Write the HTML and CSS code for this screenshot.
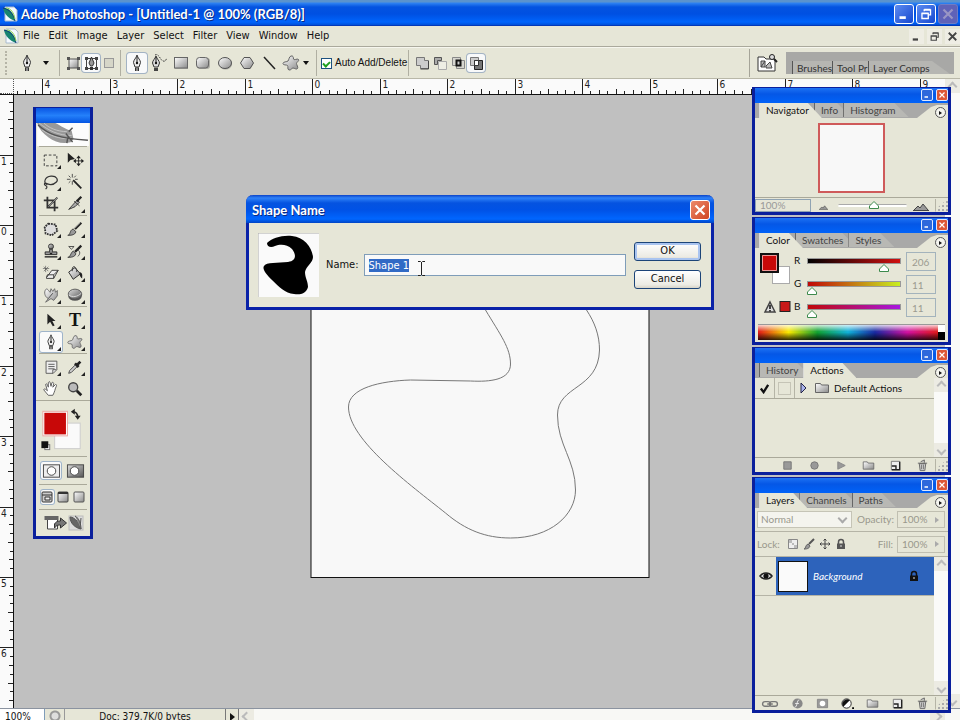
FILE: index.html
```html
<!DOCTYPE html>
<html lang="en">
<head>
<meta charset="utf-8">
<title>Adobe Photoshop - [Untitled-1 @ 100% (RGB/8)]</title>
<link rel="stylesheet" href="styles.css">
</head>
<body>
<svg class="defs" aria-hidden="true">
  <defs>
    <linearGradient id="steel" x1="0" y1="0" x2="1" y2="1"><stop offset="0" stop-color="#fff"/><stop offset="1" stop-color="#8a8a8a"/></linearGradient>
    <linearGradient id="steel-dark" x1="0" y1="0" x2="1" y2="1"><stop offset="0" stop-color="#ddd"/><stop offset="1" stop-color="#555"/></linearGradient>
  </defs>
  <symbol id="i-pen" viewBox="0 0 20 20"><path d="M10 2c-.7 3-3.500 5-3.500 7.500L8 14h4l1.500-4.500C13.500 7 10.700 5 10 2z" fill="#eee" stroke="#333"/><path d="M10 4v5" stroke="#222"/><circle cx="10" cy="10" r="1.200" fill="#111"/><path d="M8 14.500h4V18H8z" fill="#333"/><path d="M10 15v3" stroke="#ddd"/></symbol>
  <symbol id="i-freepen" viewBox="0 0 20 20"><path d="M7 3C6 6 3.500 7.500 3.500 10L5 14h4l1.500-4C10.500 8 8 6 7 3z" fill="#ddd" stroke="#333"/><path d="M7 4v5" stroke="#222"/><circle cx="7" cy="10" r="1.200" fill="#111"/><path d="M5 15h4v3H5z" fill="#444"/><path d="M6 2c4-2 5 5 8 6s3-2 4-3" fill="none" stroke="#333" stroke-dasharray="1.500 1.200"/></symbol>
  <symbol id="i-rect" viewBox="0 0 20 20"><rect x="4" y="5" width="13" height="11" fill="#777" opacity=".5"/><rect x="3.500" y="4.500" width="13" height="10.500" fill="url(#steel)" stroke="#666"/></symbol>
  <symbol id="i-rrect" viewBox="0 0 20 20"><rect x="4" y="5" width="13" height="11" rx="3" fill="#777" opacity=".5"/><rect x="3.500" y="4.500" width="12" height="10.500" rx="3" fill="url(#steel)" stroke="#666"/></symbol>
  <symbol id="i-ellipse" viewBox="0 0 20 20"><ellipse cx="10.500" cy="11" rx="6.500" ry="5.500" fill="#777" opacity=".5"/><ellipse cx="10" cy="10" rx="6.500" ry="5.500" fill="url(#steel)" stroke="#555"/></symbol>
  <symbol id="i-poly" viewBox="0 0 20 20"><path d="M7.500 5h6l3 5.500-3 5.500h-6l-3-5.500z" fill="#777" opacity=".5"/><path d="M7 4.500h6l3.500 5.500-3.500 5.500H7L3.500 10z" fill="url(#steel)" stroke="#555"/></symbol>
  <symbol id="i-line" viewBox="0 0 20 20"><path d="M5 4l11 12" stroke="#222" stroke-width="1.500"/></symbol>
  <symbol id="i-blob" viewBox="0 0 20 20"><path d="M10 3c2-.5 2.500 1 2.500 3s4-1 5 .5-2 2.500-2 4 2 3.500 1 5-3-.5-4.500-.5-2 2.500-4 2-.5-3.500-1.500-4.500S2 12.500 2 10.500 6 9 7 8s1-4.500 3-5z" fill="url(#steel)" stroke="#666"/></symbol>
  <symbol id="i-shape" viewBox="0 0 20 20"><rect x="6" y="6" width="9" height="9" fill="url(#steel)" stroke="#555"/><path d="M4 4h3v3H4zM14 4h3v3h-3zM4 14h3v3H4zM14 14h3v3h-3z" fill="#555"/></symbol>
  <symbol id="i-path" viewBox="0 0 20 20"><path d="M5.500 5.500h10v10h-10z" fill="none" stroke="#444"/><path d="M4 4h3v3H4zM14 4h3v3h-3zM4 14h3v3H4zM14 14h3v3h-3z" fill="#444"/><path d="M10.500 4L8 10l1.500 3h2L13 10z" fill="#999" stroke="#333"/><path d="M9 14h3v3H9z" fill="#333"/></symbol>
  <symbol id="i-fill" viewBox="0 0 20 20"><rect x="5.500" y="5.500" width="9" height="9" fill="#d6d6c8" stroke="#999"/></symbol>
  <symbol id="i-add" viewBox="0 0 20 20"><path d="M4.500 4.500h8v3h4v8h-8v-3h-4z" fill="#ccc" stroke="#777"/><path d="M16.500 8v8h-8" fill="none" stroke="#444"/></symbol>
  <symbol id="i-sub" viewBox="0 0 20 20"><path d="M8.500 8.500h8v8h-8z" fill="#eeeee4" stroke="#aaa"/><path d="M4.500 4.500h7v3h-4v4h-3z" fill="#aaa" stroke="#555"/></symbol>
  <symbol id="i-int" viewBox="0 0 20 20"><path d="M4.500 4.500h8v8h-8zM8.500 7.500h8v8h-8z" fill="#ccc" fill-opacity=".6" stroke="#888"/><path d="M8.500 7.500h4v5h-4z" fill="#ccc" stroke="#111" stroke-width="2"/></symbol>
  <symbol id="i-xor" viewBox="0 0 20 20"><path d="M4.500 4.500h8v8h-8z" fill="#ccc" stroke="#777"/><path d="M8.500 7.500h8v9h-8z" fill="#777" stroke="#222"/><path d="M8.500 7.500h4v5h-4z" fill="#fff" stroke="#333"/></symbol>
  <symbol id="i-browse" viewBox="0 0 22 20"><path d="M2 4h6l2 2h9v12H2z" fill="#fff" stroke="#333"/><path d="M5 8h4v6H5zM5 14l4-6M10 13l4-4 2 6h-6z" fill="#bbb" stroke="#444"/><circle cx="16" cy="4" r="2.500" fill="#ddd" stroke="#222"/><path d="M18 6l3 3" stroke="#222" stroke-width="2"/></symbol>
  <symbol id="i-marquee" viewBox="0 0 20 20"><rect x="2.500" y="4.500" width="14" height="12" fill="none" stroke="#333" stroke-dasharray="3 2"/></symbol>
  <symbol id="i-move" viewBox="0 0 20 20"><path d="M2 2v11l3-3 5-1z" fill="#222"/><path d="M14 6v10M9 11h10" stroke="#222"/><path d="M14 5l-2.500 3h5zM14 17l-2.500-3h5zM8 11l3-2.500v5zM20 11l-3-2.500v5z" fill="#222"/></symbol>
  <symbol id="i-lasso" viewBox="0 0 20 20"><path d="M6 13C1 11 3 4 10 3.500S18 8 16 10s-6 4-10 2-4 1-2 2 2 2 0 4" fill="none" stroke="#333" stroke-width="1.300"/></symbol>
  <symbol id="i-wand" viewBox="0 0 20 20"><path d="M8 8l9 9" stroke="#222" stroke-width="2"/><path d="M7 1v4M7 9v4M1 7h4M3 3l2 2M11 3L9 5M3 11l2-2M10 7h3" stroke="#444"/></symbol>
  <symbol id="i-crop" viewBox="0 0 20 20"><path d="M6 2v12h12M2 6h12v12M7 13L17 3" fill="none" stroke="#333" stroke-width="2"/><path d="M7 13L17 3" stroke="#999"/></symbol>
  <symbol id="i-slice" viewBox="0 0 20 20"><path d="M3 16L12 6l3 2-5 5z" fill="#aaa" stroke="#333"/><path d="M12 7l5-5" stroke="#222" stroke-width="2.500"/><path d="M9 7l6 5" stroke="#333"/></symbol>
  <symbol id="i-heal" viewBox="0 0 20 20"><path d="M7 4l8 1 2 7-6 5-7-2-1-7z" fill="#ddd" stroke="#333" stroke-width="2" stroke-dasharray="2 1"/></symbol>
  <symbol id="i-brush" viewBox="0 0 20 20"><path d="M10 10l7-7" stroke="#222" stroke-width="2.500"/><path d="M2 17c3 0 2-6 6-7l3 3c-1 4-6 4-9 4z" fill="#999" stroke="#333"/><path d="M10 9l6-6" stroke="#999"/></symbol>
  <symbol id="i-stamp" viewBox="0 0 20 20"><circle cx="10" cy="5" r="2.800" fill="url(#steel-dark)" stroke="#333"/><path d="M8.500 8h3v3h5v3h-13v-3h5z" fill="#999" stroke="#222"/><path d="M3 16.500h14" stroke="#222" stroke-width="1.500"/><path d="M8 12h4l-2 2z" fill="#111"/></symbol>
  <symbol id="i-hist" viewBox="0 0 20 20"><path d="M10 11l7-7" stroke="#222" stroke-width="2.500"/><path d="M2 17c3 0 3-5 6-7l3 3c-1 4-6 4-9 4z" fill="#999" stroke="#333"/><path d="M3 5h6l-3 3zM13 9c3 1 3 5 0 7" fill="none" stroke="#444"/></symbol>
  <symbol id="i-erase" viewBox="0 0 20 20"><path d="M5 15l6-8h7l-5 9H5z" fill="#eee" stroke="#333"/><path d="M5 15l1-3h7l5-5M13 12v4" fill="none" stroke="#333"/><path d="M4 2v7M1 5h7M2 3l5 5M7 3L2 8" stroke="#555" stroke-width=".700"/></symbol>
  <symbol id="i-bucket" viewBox="0 0 20 20"><path d="M3 9l7-5 6 7-8 6z" fill="url(#steel)" stroke="#222"/><path d="M7 8c-1-6 4-8 5 1" fill="none" stroke="#333"/><path d="M15 9c4 1 3 4 3 7-2-1-3-3-3-7z" fill="#222"/></symbol>
  <symbol id="i-smudge" viewBox="0 0 20 20"><path d="M4 18l3-4c-4-2-5-7-3-10 2-2 3 1 5 3l1-4 2 3 2-3 1 4 2-2v6l-4 5-3-2z" fill="url(#steel)" stroke="#666"/><path d="M7 14l5-6" stroke="#444"/></symbol>
  <symbol id="i-sponge" viewBox="0 0 20 20"><ellipse cx="10" cy="11" rx="7.500" ry="5.500" fill="#555"/><ellipse cx="10" cy="9" rx="7.500" ry="5.500" fill="url(#steel-dark)" stroke="#555"/><path d="M3 10c4 3 10 2 14-2" fill="none" stroke="#ddd"/></symbol>
  <symbol id="i-arrow" viewBox="0 0 20 20"><path d="M6 3v12l3-3 3 5 2-1-2.500-5H15z" fill="#222"/></symbol>
  <symbol id="i-note" viewBox="0 0 20 20"><path d="M4.500 3.500h12V13l-4 4h-8z" fill="#eee" stroke="#555"/><path d="M7 7h7M7 9.500h7M7 12h7M12 17v-4h4" fill="none" stroke="#555"/></symbol>
  <symbol id="i-dropper" viewBox="0 0 20 20"><path d="M3 17l1-3 7-7 2 2-7 7z" fill="#ccc" stroke="#444"/><path d="M10 6l4 4M12 8l4-4" stroke="#222" stroke-width="3"/></symbol>
  <symbol id="i-hand" viewBox="0 0 20 20"><path d="M7 17L2 11c0-2 2-1 4 1L4 5c1-2 2 0 3 3V3c1-2 2-1 2 0l1 4 1-4c1-1 2 0 2 1l-1 4 3-3c2 0 1 2 0 4-1 4-2 6-3 8z" fill="#fff" stroke="#555"/></symbol>
  <symbol id="i-zoom" viewBox="0 0 20 20"><circle cx="8" cy="8" r="5" fill="#bbb" stroke="#444" stroke-width="1.500"/><path d="M12 12l5 5" stroke="#222" stroke-width="3"/></symbol>
  <symbol id="i-std" viewBox="0 0 20 16"><rect x="1.500" y="1.500" width="17" height="13" fill="#eee" stroke="#444"/><circle cx="10" cy="8" r="4.500" fill="#fff" stroke="#444"/></symbol>
  <symbol id="i-qm" viewBox="0 0 20 16"><rect x="1.500" y="1.500" width="17" height="13" fill="url(#steel-dark)" stroke="#444"/><circle cx="9" cy="8" r="4.500" fill="#fff" stroke="#444"/></symbol>
  <symbol id="i-scr1" viewBox="0 0 14 14"><rect x="2" y="2" width="10" height="10" rx="1" fill="#ccc" stroke="#333"/><path d="M2 5h10M5 7h5v3H5z" fill="#eee" stroke="#333"/></symbol>
  <symbol id="i-scr2" viewBox="0 0 14 14"><rect x="2" y="2" width="10" height="10" rx="1" fill="url(#steel)" stroke="#444"/><path d="M2 3h10" stroke="#333" stroke-width="2"/></symbol>
  <symbol id="i-scr3" viewBox="0 0 14 14"><rect x="2" y="2" width="10" height="10" rx="1" fill="url(#steel)" stroke="#555"/></symbol>
  <symbol id="i-jump" viewBox="0 0 24 18"><path d="M4 4h10v11H4z" fill="#fff" stroke="#444"/><path d="M1 2h14v4H1z" fill="#666"/><path d="M11 10c2-3 4-3 6-3V4l6 5-6 5v-3c-2 0-4 0-6 3z" fill="#777" stroke="#333"/></symbol>
  <symbol id="i-feather" viewBox="0 0 16 18"><rect x="1" y="2" width="14" height="14" fill="#ddd" stroke="#bbb"/><path d="M2 3c5 0 10 7 11 12C7 14 2 9 2 3zM13 4l-1 10" fill="#666" stroke="#555"/><path d="M7 2c4 2 6 8 6 13" fill="#888" stroke="#555"/></symbol>
  <symbol id="i-leaf" viewBox="0 0 16 16"><path d="M3 1h9l3 3v11H3z" fill="#f4f9ff" stroke="#abc"/><path d="M1 2c6-1 11 5 12 13C7 13 2 8 1 2z" fill="#17846f"/><path d="M1 2c6 1 11 6 12 13" fill="none" stroke="#123a7a"/><path d="M4 2c5 0 8 5 9 11" fill="none" stroke="#8bd14a"/></symbol>
  <symbol id="i-folder" viewBox="0 0 16 14"><path d="M1.500 11.500v-9h5l1 1.500h7v7.500z" fill="url(#steel)" stroke="#666"/></symbol>
  <symbol id="i-new" viewBox="0 0 14 14"><path d="M2.500 2.500h9v9h-9z" fill="#eee" stroke="#777"/><path d="M3 7.500h4.500V11M11.500 3v8.500H3" fill="none" stroke="#222" stroke-width="1.500"/></symbol>
  <symbol id="i-trash" viewBox="0 0 14 14"><path d="M3.500 5h7l-1 7.500h-5zM2 4.500h10M5 3l4-2v3" fill="#ccc" stroke="#666"/><path d="M6 6v5M8 6v5" stroke="#777"/></symbol>
  <symbol id="i-lock" viewBox="0 0 12 12"><path d="M3.500 6V4a2.500 2.500 0 015 0v2" fill="none" stroke="currentColor" stroke-width="1.500"/><path d="M2 5.500h8V11H2z" fill="currentColor"/><path d="M5.500 7h1v2h-1z" fill="#ddd"/></symbol>
  <symbol id="i-thumb" viewBox="0 0 10 8"><path d="M.5 7.500V5L5 .5 9.500 5v2.500z" fill="#fff" stroke="#3c8a4c"/></symbol>
  <symbol id="i-min" viewBox="0 0 20 20"><path d="M5 14h7" stroke="currentColor" stroke-width="3"/></symbol>
  <symbol id="i-restore" viewBox="0 0 20 20"><path d="M8 7V5.500h7V11h-2M8 5h7M5.500 9.500h7v5.500h-7zM5 9h8" fill="none" stroke="currentColor" stroke-width="1.500"/></symbol>
  <symbol id="i-close" viewBox="0 0 20 20"><path d="M5 5l10 10M15 5L5 15" stroke="currentColor" stroke-width="2.400"/></symbol>
  <symbol id="i-peak" viewBox="0 0 16 8"><path d="M0 7.500h16M1 7l4-4 2 2 3-4 5 6" fill="#999" stroke="#444"/></symbol>
</svg>

<div class="app">
  <header class="titlebar">
    <svg class="ic16"><use href="#i-leaf"/></svg>
    <h1>Adobe Photoshop - [Untitled-1 @ 100% (RGB/8)]</h1>
    <div class="winbtns">
      <button class="win" aria-label="Minimize"><svg><use href="#i-min"/></svg></button>
      <button class="win" aria-label="Restore"><svg><use href="#i-restore"/></svg></button>
      <button class="win off" aria-label="Close"><svg><use href="#i-close"/></svg></button>
    </div>
  </header>

  <nav class="menubar">
    <svg class="ic16"><use href="#i-leaf"/></svg>
    <div class="menus">
      <button>File</button><button>Edit</button><button>Image</button><button>Layer</button><button>Select</button><button>Filter</button><button>View</button><button>Window</button><button>Help</button>
    </div>
    <div class="docbtns">
      <button aria-label="Minimize document"><svg><use href="#i-min"/></svg></button>
      <button aria-label="Restore document"><svg><use href="#i-restore"/></svg></button>
      <button aria-label="Close document"><svg><use href="#i-close"/></svg></button>
    </div>
  </nav>

  <section class="options" aria-label="Tool options">
    <div class="grip"></div>
    <button class="opt" aria-label="Pen presets"><svg><use href="#i-pen"/></svg></button>
    <span class="caret"></span>
    <div class="optgroup modes">
      <button class="opt" aria-label="Shape layers"><svg><use href="#i-shape"/></svg></button>
      <button class="opt on" aria-label="Paths"><svg><use href="#i-path"/></svg></button>
      <button class="opt" aria-label="Fill pixels"><svg><use href="#i-fill"/></svg></button>
    </div>
    <div class="optgroup shapes">
      <button class="opt on" aria-label="Pen"><svg><use href="#i-pen"/></svg></button>
      <button class="opt" aria-label="Freeform pen"><svg><use href="#i-freepen"/></svg></button>
      <button class="opt" aria-label="Rectangle"><svg><use href="#i-rect"/></svg></button>
      <button class="opt" aria-label="Rounded rectangle"><svg><use href="#i-rrect"/></svg></button>
      <button class="opt" aria-label="Ellipse"><svg><use href="#i-ellipse"/></svg></button>
      <button class="opt" aria-label="Polygon"><svg><use href="#i-poly"/></svg></button>
      <button class="opt" aria-label="Line"><svg><use href="#i-line"/></svg></button>
      <button class="opt" aria-label="Custom shape"><svg><use href="#i-blob"/></svg></button>
      <span class="caret"></span>
    </div>
    <div class="optgroup auto">
      <input type="checkbox" id="auto" checked><label for="auto">Auto Add/Delete</label>
    </div>
    <div class="optgroup combine">
      <button class="opt" aria-label="Add"><svg><use href="#i-add"/></svg></button>
      <button class="opt" aria-label="Subtract"><svg><use href="#i-sub"/></svg></button>
      <button class="opt" aria-label="Intersect"><svg><use href="#i-int"/></svg></button>
      <button class="opt on" aria-label="Exclude"><svg><use href="#i-xor"/></svg></button>
    </div>
    <div class="well-area">
      <button class="browse" aria-label="Go to Bridge"><svg><use href="#i-browse"/></svg></button>
      <div class="well">
        <button>Brushes</button><button>Tool Pr</button><button>Layer Comps</button>
      </div>
    </div>
  </section>

  <main class="work">
    <div class="hrow"><div class="corner"></div><svg class="hruler" id="hruler"></svg></div>
    <div class="vrow">
      <svg class="vruler" id="vruler"></svg>
      <div class="canvas">
        <svg class="artboard" viewBox="0 0 339 338">
          <rect x=".5" y=".5" width="338" height="337" fill="#f8f8f8" stroke="#111"/>
          <path d="M40 42C80 0 150 20 175 70C190 95 200 108 200 124C200 140 180 142 160 141L100 140C70 141 38 148 38 167C38 200 100 245 135 273C155 290 175 298 200 298C240 298 265 275 265 250C265 220 247 205 247 175C247 145 288 150 289 110C289 95 284 82 276 70C250 10 120 -10 40 42Z" fill="none" stroke="#777" stroke-width="1"/>
        </svg>
      </div>
    </div>
    <div class="vscroll pscroll"><button aria-label="Scroll up"></button><button class="dn" aria-label="Scroll down"></button></div>
  </main>

  <footer class="status">
    <input class="zoompct" aria-label="Zoom" value="100%">
    <button class="stat-ic" aria-label="Version cue"></button>
    <span class="docinfo">Doc: 379.7K/0 bytes</span>
    <button class="stat-arrow" aria-label="Status menu"></button>
    <div class="hscroll"><button class="lf" aria-label="Scroll left"></button><button class="rt" aria-label="Scroll right"></button></div>
  </footer>

  <aside class="toolbox" aria-label="Tools">
    <div class="tb-title"></div>
    <svg class="quill" viewBox="0 0 54 24"><rect width="54" height="24" fill="#fcfcfc"/><path d="M0 0h19c6 3 11 7 17 8l2 9-3 3c-8 2-17 0-23-5C6 11 2 6 0 0z" fill="#999"/><path d="M2 0c10 8 20 13 34 13M7 0c5 5 14 9 24 9M5 7c8 6 18 10 29 9" fill="none" stroke="#c4c4c4"/><path d="M1 2c10 9 20 14 52 16M30 11l7 9M33 9l4-4M32 15l-1 6" fill="none" stroke="#555" stroke-width="1.500"/></svg>
    <div class="tools">
      <button aria-label="Marquee"><svg><use href="#i-marquee"/></svg></button><button class="nofly" aria-label="Move"><svg><use href="#i-move"/></svg></button>
      <button aria-label="Lasso"><svg><use href="#i-lasso"/></svg></button><button class="nofly" aria-label="Magic wand"><svg><use href="#i-wand"/></svg></button>
      <button class="nofly" aria-label="Crop"><svg><use href="#i-crop"/></svg></button><button aria-label="Slice"><svg><use href="#i-slice"/></svg></button>
    </div>
    <div class="tools">
      <button aria-label="Healing"><svg><use href="#i-heal"/></svg></button><button aria-label="Brush"><svg><use href="#i-brush"/></svg></button>
      <button aria-label="Stamp"><svg><use href="#i-stamp"/></svg></button><button aria-label="History brush"><svg><use href="#i-hist"/></svg></button>
      <button aria-label="Eraser"><svg><use href="#i-erase"/></svg></button><button aria-label="Paint bucket"><svg><use href="#i-bucket"/></svg></button>
      <button aria-label="Smudge"><svg><use href="#i-smudge"/></svg></button><button aria-label="Sponge"><svg><use href="#i-sponge"/></svg></button>
    </div>
    <div class="tools">
      <button aria-label="Path selection"><svg><use href="#i-arrow"/></svg></button><button class="type">T</button>
      <button class="on" aria-label="Pen"><svg><use href="#i-pen"/></svg></button><button aria-label="Custom shape"><svg><use href="#i-blob"/></svg></button>
    </div>
    <div class="tools">
      <button aria-label="Notes"><svg><use href="#i-note"/></svg></button><button aria-label="Eyedropper"><svg><use href="#i-dropper"/></svg></button>
      <button class="nofly" aria-label="Hand"><svg><use href="#i-hand"/></svg></button><button class="nofly" aria-label="Zoom"><svg><use href="#i-zoom"/></svg></button>
    </div>
    <svg class="colors" viewBox="0 0 54 56"><rect x="18.500" y="22.500" width="26" height="26" fill="#fafafa" stroke="#ccc"/><rect x="6.500" y="10.500" width="25" height="25" fill="#fff" stroke="#e7a9a4"/><rect x="8" y="12" width="22" height="22" fill="#c80808"/><path d="M37 11c4 0 5 2 5 6" fill="none" stroke="#222" stroke-width="1.500"/><path d="M35 11l4-3v6zM42 19l-3-4h6z" fill="#222"/><rect x="8.500" y="44.500" width="5" height="5" fill="#fff" stroke="#777"/><path d="M5 41h7v7H5z" fill="#111"/></svg>
    <div class="mask"><button class="on" aria-label="Standard mode"><svg><use href="#i-std"/></svg></button><button aria-label="Quick mask"><svg><use href="#i-qm"/></svg></button></div>
    <div class="screens"><button class="on" aria-label="Standard screen"><svg><use href="#i-scr1"/></svg></button><button aria-label="Full screen with menu"><svg><use href="#i-scr2"/></svg></button><button aria-label="Full screen"><svg><use href="#i-scr3"/></svg></button></div>
    <div class="jump"><button aria-label="Jump to ImageReady"><svg class="j1"><use href="#i-jump"/></svg></button><button aria-label="ImageReady"><svg class="j2"><use href="#i-feather"/></svg></button></div>
  </aside>

  <aside class="dock" aria-label="Palettes">
    <section class="palette nav-pal">
      <div class="p-title"><button class="pb" aria-label="Minimize"><svg><use href="#i-min"/></svg></button><button class="pb red" aria-label="Close"><svg><use href="#i-close"/></svg></button></div>
      <div class="tabs"><button class="tab on">Navigator</button><button class="tab">Info</button><button class="tab">Histogram</button><span class="sweep"></span><button class="pm" aria-label="Palette menu"></button></div>
      <div class="nav-body"><div class="preview"></div></div>
      <div class="p-foot nav-foot"><input aria-label="Zoom level" value="100%" disabled><svg class="pk small"><use href="#i-peak"/></svg><div class="track"><svg class="knob"><use href="#i-thumb"/></svg></div><svg class="pk"><use href="#i-peak"/></svg><i class="size"></i></div>
    </section>

    <section class="palette col-pal">
      <div class="p-title"><button class="pb" aria-label="Minimize"><svg><use href="#i-min"/></svg></button><button class="pb red" aria-label="Close"><svg><use href="#i-close"/></svg></button></div>
      <div class="tabs"><button class="tab on">Color</button><button class="tab">Swatches</button><button class="tab">Styles</button><span class="sweep"></span><button class="pm" aria-label="Palette menu"></button></div>
      <div class="col-body">
        <svg class="swatch" viewBox="0 0 34 68"><rect x="12.500" y="14.500" width="17" height="17" fill="#fff" stroke="#aaa"/><rect x="1" y="2" width="17" height="18" fill="#c80808" stroke="#111" stroke-width="2"/><path d="M2.500 3.500h14v15h-14z" fill="none" stroke="#e99"/><path d="M10 50l5 10H5z" fill="#ddd" stroke="#444" stroke-width="1.500"/><path d="M10 53v4M10 58v1.500" stroke="#111" stroke-width="1.500"/><rect x="20" y="49.500" width="10" height="10" fill="#c81818" stroke="#222"/></svg>
        <div class="rgb">
          <label for="r">R</label><div class="ramp r"><i></i><svg class="knob" style="left:77%"><use href="#i-thumb"/></svg></div><input id="r" value="206" disabled>
          <label for="g">G</label><div class="ramp g"><i></i><svg class="knob" style="left:0"><use href="#i-thumb"/></svg></div><input id="g" value="11" disabled>
          <label for="b">B</label><div class="ramp b"><i></i><svg class="knob" style="left:0"><use href="#i-thumb"/></svg></div><input id="b" value="11" disabled>
        </div>
      </div>
      <div class="spectrum"><div class="hues"></div><div class="bw"></div></div>
    </section>

    <section class="palette act-pal">
      <div class="p-title"><button class="pb" aria-label="Minimize"><svg><use href="#i-min"/></svg></button><button class="pb red" aria-label="Close"><svg><use href="#i-close"/></svg></button></div>
      <div class="tabs"><button class="tab">History</button><button class="tab on">Actions</button><span class="sweep"></span><button class="pm" aria-label="Palette menu"></button></div>
      <div class="listwrap act-list">
        <div class="list"><div class="arow"><span class="cell"><svg viewBox="0 0 12 12"><path d="M2 6l3 4 5-8" fill="none" stroke="#111" stroke-width="2.500"/></svg></span><span class="cell"><i class="box"></i></span><svg class="tri" viewBox="0 0 8 12"><path d="M1 1l5 5-5 5z" fill="#aab4ec" stroke="#224"/></svg><svg class="fold"><use href="#i-folder"/></svg><span>Default Actions</span></div></div>
        <div class="pscroll"><button aria-label="Up"></button><button class="dn" aria-label="Down"></button></div>
      </div>
      <div class="p-foot"><div class="ficons act-ic">
        <svg viewBox="0 0 14 14"><path d="M3 3h8v8H3z" fill="#999" stroke="#777"/></svg><svg viewBox="0 0 14 14"><circle cx="7" cy="7" r="4" fill="#999" stroke="#777"/></svg><svg viewBox="0 0 14 14"><path d="M3 3l8 4-8 4z" fill="#999" stroke="#888"/></svg><svg><use href="#i-folder"/></svg><svg><use href="#i-new"/></svg><svg><use href="#i-trash"/></svg></div><i class="size"></i></div>
    </section>

    <section class="palette lay-pal">
      <div class="p-title"><button class="pb" aria-label="Minimize"><svg><use href="#i-min"/></svg></button><button class="pb red" aria-label="Close"><svg><use href="#i-close"/></svg></button></div>
      <div class="tabs"><button class="tab on">Layers</button><button class="tab">Channels</button><button class="tab">Paths</button><span class="sweep"></span><button class="pm" aria-label="Palette menu"></button></div>
      <div class="lrow"><div class="selwrap"><select aria-label="Blend mode" disabled><option>Normal</option></select></div><label for="op">Opacity:</label><div class="num"><input id="op" value="100%" disabled><span></span></div></div>
      <div class="lrow lockrow"><span>Lock:</span>
        <svg viewBox="0 0 12 12"><path d="M1.500 1.500h9v9h-9z" fill="#eee" stroke="#888"/><path d="M2 2h3v3H2zM7 7h3v3H7zM5 5h2v2H5z" fill="#bbb"/></svg>
        <svg viewBox="0 0 12 12"><path d="M6 6l5-5" stroke="#555" stroke-width="2"/><path d="M1 11c2 0 1-4 4-5l2 2c-1 3-4 3-6 3z" fill="#999" stroke="#666"/></svg>
        <svg viewBox="0 0 12 12"><path d="M6 1v10M1 6h10M4.500 2.500L6 1l1.500 1.500M4.500 9.500L6 11l1.500-1.500M2.500 4.500L1 6l1.500 1.500M9.500 4.500L11 6 9.500 7.500" fill="none" stroke="#444"/></svg>
        <svg class="lk"><use href="#i-lock"/></svg>
        <label for="fi">Fill:</label><div class="num"><input id="fi" value="100%" disabled><span></span></div></div>
      <div class="listwrap lay-list">
        <div class="list"><div class="layer"><span class="eye"><svg viewBox="0 0 14 12"><path d="M1 6c3-4 9-4 12 0-3 4-9 4-12 0z" fill="#ddd" stroke="#222" stroke-width="1.500"/><circle cx="7" cy="6" r="2.600" fill="#111"/></svg></span><div class="lsel"><span class="lthumb"></span><em>Background</em><svg class="lk"><use href="#i-lock"/></svg></div></div></div>
        <div class="pscroll"><button aria-label="Up"></button><button class="dn" aria-label="Down"></button></div>
      </div>
      <div class="p-foot"><div class="ficons">
        <svg class="wide" viewBox="0 0 18 14"><path d="M3 5h4a2 2 0 010 5H3.500a2 2 0 010-5M11 5h3.500a2 2 0 010 5H11a2 2 0 010-5M6 7.500h6" fill="none" stroke="#777" stroke-width="1.500"/></svg>
        <svg viewBox="0 0 14 14"><circle cx="7" cy="7" r="5.500" fill="#888"/><path d="M9 3c-3 0-2 8-5 8M4.500 7h4" stroke="#eee" fill="none"/></svg>
        <svg viewBox="0 0 14 14"><path d="M1.500 2.500h11v9h-11z" fill="#999" stroke="#888"/><circle cx="7" cy="7" r="3" fill="#fff"/></svg>
        <svg viewBox="0 0 14 14"><circle cx="6" cy="7" r="5" fill="#fff" stroke="#222"/><path d="M2.500 10.500a5 5 0 017-7z" fill="#111"/><path d="M12 11h2v2h-2z"/></svg>
        <svg><use href="#i-folder"/></svg><svg><use href="#i-new"/></svg><svg><use href="#i-trash"/></svg></div><i class="size"></i></div>
    </section>
  </aside>

  <form class="dialog" role="dialog" aria-label="Shape Name">
    <div class="d-title"><h2>Shape Name</h2><button type="button" class="d-close" aria-label="Close"><svg><use href="#i-close"/></svg></button></div>
    <div class="d-body">
      <svg class="d-thumb" viewBox="0 0 61 64"><rect width="61" height="64" fill="#fafafa"/><path d="M0 64V0h61" fill="none" stroke="#aaa"/><path d="M9 10C14 5 24 2 34 3C46 4 54 14 55 24C55 30 48 33 47 39C47 45 50 48 50 54C48 61 42 62 36 61C27 60 21 54 14 47C8 41 4 36 6 33C8 29 20 30 30 29C39 28 38 21 34 16C29 11 22 11 17 13C13 15 9 14 9 10Z" fill="#000"/></svg>
      <label for="name">Name:</label>
      <input id="name" value="Shape 1" autocomplete="off">
      <div class="d-btns"><button type="button" class="default">OK</button><button type="button">Cancel</button></div>
    </div>
    <svg class="ibeam" viewBox="0 0 9 17"><path d="M1 1.500h2.500L4.500 2.500l1-1H8M4.500 2v13M1 15.500h2.500l1-1 1 1H8" fill="none" stroke="#222"/></svg>
  </form>
</div>
<script src="app.js"></script>
</body>
</html>
```

FILE: styles.css
```css
* { box-sizing: border-box; }
:root {
  --face: #e6e6d7;
  --navy: #0a1f9c;
  --ui: "DejaVu Sans Condensed", "Noto Sans", sans-serif;
  --pal: Lato, "Open Sans", sans-serif;
}
body { margin: 0; background: #c0c0c0; font: 11px/14px var(--ui); color: #111; }
button, input, select { font: inherit; color: inherit; margin: 0; padding: 0; border: 0; background: none; border-radius: 0; }
button svg { display: block; }
h1, h2 { margin: 0; }
.defs { position: absolute; width: 0; height: 0; }
.app { position: relative; display: flex; flex-direction: column; height: 100vh; overflow: hidden; }
.ic16 { width: 16px; height: 16px; flex: none; }

.titlebar { display: flex; align-items: center; height: 26px; flex: none; padding: 2px 2px 0 2px; border-bottom: 1px solid #0438b8; background: linear-gradient(#5b93cd 0 2px, #2f83f2 3px, #0453e0 7px, #0050e2 14px, #0064fc 22px, #0048cc 26px); }
.titlebar h1, .dialog h2 { font: bold 13px/18px var(--pal); color: #fff; text-shadow: 1px 1px 0 #0a2a80; white-space: nowrap; }
.titlebar h1 { margin-left: 3px; flex: 1; }
.winbtns { display: flex; gap: 2px; }
.win { width: 20px; height: 20px; border: 1px solid #fff; border-radius: 3px; color: #fff; background: linear-gradient(135deg, #5d8cf0, #1547d0); }
.win svg { width: 18px; height: 18px; }
.win.off { border-color: #6f7cc4; background: #5f62b8; color: #9a96c4; }

.menubar { display: flex; align-items: center; height: 21px; flex: none; padding: 0 0 0 3px; background: var(--face); border-bottom: 1px solid #aaa99c; }
.menus { display: flex; gap: 9px; flex: 1; padding-left: 4px; }
.docbtns { display: flex; gap: 3px; }
.docbtns button { width: 15px; height: 15px; background: #eeede4; color: #444; }
.docbtns svg { width: 15px; height: 15px; }

.options { display: flex; align-items: center; height: 32px; flex: none; background: var(--face); border-top: 1px solid #f6f6ee; border-bottom: 1px solid #b9b8a8; }
.grip { width: 2px; height: 24px; margin: 0 10px 0 5px; border-left: 2px dotted #b5b4a6; }
.opt { width: 20px; height: 20px; flex: none; border-radius: 3px; }
.opt svg { width: 20px; height: 20px; }
.opt.on { background: #f8f9fa; box-shadow: 0 0 0 1px #a3b3c4; }
.caret { border: 3px solid transparent; border-top: 4px solid #111; border-bottom: 0; margin: 0 6px; }
.optgroup { display: flex; align-items: center; height: 26px; border-left: 1px solid #b0afa2; }
.modes { margin-left: 4px; padding: 0 2px 0 4px; }
.modes .opt, .combine .opt { display: grid; place-content: center; width: 18px; height: 18px; }
.shapes { width: 196px; padding-left: 6px; justify-content: space-between; }
.shapes .caret { margin: 0 7px 0 0; }
.auto { padding: 0 6px 0 4px; width: 92px; white-space: nowrap; gap: 3px; font: 10px/14px "Liberation Sans", sans-serif; }
.auto input { appearance: none; width: 11px; height: 11px; flex: none; border: 1px solid #1c5180; background: #fff; display: grid; place-items: center; }
.auto input::after { content: ""; width: 3px; height: 5px; border: solid #21a121; border-width: 0 2px 2px 0; transform: rotate(45deg); }
.combine { padding-left: 4px; }
.well-area { display: flex; align-items: center; margin-left: auto; height: 28px; padding: 0 6px 0 6px; gap: 8px; border-left: 1px solid #a5a498; }
.browse svg { width: 22px; height: 20px; }
.well { display: flex; align-items: flex-end; width: 168px; height: 22px; padding-left: 6px; background: #a8a8a6; font: 10px/12px var(--pal); color: #333; }
.well button { height: 13px; padding: 0 0 0 4px; border-left: 1px solid #555; background: #b6b6b2; white-space: nowrap; }
.well button:nth-child(-n+2) { width: 40px; text-align: left; flex: none; }
.well button:nth-child(2) { width: 36px; }
.well button:last-child { flex: 1; margin-right: 4px; text-align: left; clip-path: polygon(0 0, calc(100% - 18px) 0, 100% 100%, 0 100%); }

.work { position: relative; flex: 1; display: flex; flex-direction: column; min-height: 0; padding-right: 15px; background: #f4f4f0; }
.hrow { display: flex; height: 16px; flex: none; background: #fafafa; border-bottom: 1px solid #111; }
.corner { width: 14px; border-right: 1px dotted #555; border-bottom: 1px dotted #555; flex: none; }
.hruler { flex: 1; min-width: 0; height: 15px; }
.vrow { flex: 1; min-height: 0; display: flex; }
.vruler { width: 14px; height: 100%; flex: none; background: #fafafa; border-right: 1px solid #111; }
.hruler line, .vruler line { stroke: #222; shape-rendering: crispEdges; }
.hruler text, .vruler text { font: 10px var(--ui); fill: #222; }
.canvas { position: relative; flex: 1; overflow: hidden; background: #c0c0c0; }
.artboard { position: absolute; left: 296px; top: 145px; width: 340px; height: 338px; }
.work .vscroll { position: absolute; right: 0; top: 0; bottom: 0; width: 15px; }

.status { display: flex; height: 12px; flex: none; line-height: 15px; font-size: 10px; background: var(--face); border-top: 1px solid #8b93a0; overflow: hidden; }
.status > * { height: 15px; flex: none; }
.zoompct { width: 45px; padding-left: 5px; background: #fff; border-right: 1px solid #7f9db9; }
.stat-ic { width: 20px; border-right: 1px solid #999; background: radial-gradient(circle at 10px 7px, #ddd 0 3px, #999 4px 5px, transparent 6px); }
.docinfo { width: 161px; text-align: center; border-right: 1px solid #777; }
.stat-arrow { width: 13px; border-right: 1px solid #777; display: grid; place-items: center; }
.stat-arrow::after { content: ""; border: 4px solid transparent; border-left: 5px solid #111; border-right: 0; }
.status .hscroll { flex: 1; display: flex; justify-content: space-between; padding-right: 15px; background: #f8f8f5; }
.hscroll button { width: 15px; background: #ecebe2; display: grid; place-items: center; }
.hscroll button::after { content: ""; width: 5px; height: 5px; border: solid #bbb; border-width: 2px 0 0 2px; transform: rotate(-45deg); }
.hscroll .rt::after { transform: rotate(135deg); }

.toolbox { position: absolute; left: 33px; top: 107px; width: 60px; border: solid var(--navy); border-width: 1px 3px 3px; background: var(--face); }
.tb-title { height: 15px; background: linear-gradient(#0a56e4, #2480fa, #0455e2); }
.quill { display: block; width: 54px; height: 23px; }
.tools, .mask, .screens { margin: 0 3px; border-top: 1px solid #aaa99a; }
.tools { display: grid; grid-template-columns: 24px 24px; grid-auto-rows: 22px; padding-top: 2px; }
.tools button { position: relative; display: grid; place-items: center; }
.tools svg { width: 18px; height: 18px; }
.tools button::after { content: ""; position: absolute; right: 2px; bottom: 2px; border: 2px solid #222; border-top-color: transparent; border-left-color: transparent; }
.tools .nofly::after { display: none; }
.tools .on, .mask .on, .screens .on { background: #fafafa; box-shadow: inset 0 0 0 1px #9fb4c9; border-radius: 3px; }
.type { font: bold 18px/20px "Liberation Serif", serif; }
.colors { display: block; width: 54px; height: 56px; border-top: 1px solid #aaa99a; }
.mask { display: flex; gap: 2px; padding: 4px 1px; height: 28px; }
.mask button { width: 22px; display: grid; place-items: center; }
.mask svg { width: 19px; height: 16px; }
.screens { display: flex; gap: 1px; padding: 4px 1px; height: 25px; }
.screens button { width: 15px; height: 16px; }
.screens svg { width: 14px; height: 14px; margin: auto; }
.jump { display: flex; align-items: center; margin: 0 3px; padding-left: 4px; height: 27px; border-top: 1px solid #aaa99a; }
.j1 { width: 25px; height: 18px; }
.j2 { width: 16px; height: 18px; }

.dock { position: absolute; right: 9px; top: 87px; width: 199px; display: flex; flex-direction: column; gap: 2px; font: 10px/13px var(--pal); }
.palette { border: solid var(--navy); border-width: 1px 3px 3px; background: var(--face); }
.p-title { height: 15px; display: flex; justify-content: flex-end; gap: 3px; padding-top: 1px; background: linear-gradient(#1d72f3, #0557e6 40%, #0062f8); }
.pb { width: 12px; height: 12px; border: 1px solid #dfe8ff; border-radius: 2px; color: #fff; background: #2e68dc; }
.pb svg { width: 10px; height: 10px; }
.pb.red { background: #dd5838; }
.tabs { display: flex; position: relative; height: 15px; padding-left: 4px; background: #a9a9a8; }
.tab { position: relative; height: 14px; padding: 0 13px 0 6px; margin-right: -8px; background: #b8b8b4; color: #444; border-left: 1px solid #666; clip-path: polygon(0 0, calc(100% - 14px) 0, 100% 100%, 0 100%); white-space: nowrap; }
.tab.on { z-index: 1; height: 15px; background: var(--face); color: #111; border-left-color: #ddd; }
.tabs .sweep { position: absolute; right: 0; bottom: 0; width: 31px; height: 13px; background: var(--face); clip-path: polygon(0 100%, 14px 2px, 20px 0, 100% 0, 100% 100%); }
.pm { position: absolute; right: 2px; top: 4px; width: 11px; height: 11px; border: 1px solid #555; border-radius: 50%; background: #f4f4ee; display: grid; place-items: center; }
.pm::after { content: ""; border: 2px solid transparent; border-left: 3px solid #111; border-right: 0; }
.p-foot { display: flex; align-items: center; height: 15px; border-top: 1px solid #aaa99a; }
.size { width: 13px; height: 13px; margin-left: auto; flex: none; border-left: 1px solid #b5b4a6; background: radial-gradient(circle, #aaa 1px, transparent 1px) 1px 1px / 4px 4px; clip-path: polygon(0 0, 1px 0, 1px 80%, 100% 0, 100% 100%, 0 100%); }

.nav-body { height: 79px; padding: 5px 0 0 63px; }
.preview { width: 67px; height: 70px; background: #f8f8f8; border: 2px solid #cf5a5a; }
.nav-foot input { width: 56px; height: 13px; padding-left: 4px; border: 1px solid #8fa3b3; color: #999; }
.pk { width: 16px; height: 8px; margin: 3px 6px 0; flex: none; }
.pk.small { width: 9px; height: 5px; margin: 5px 10px 0 8px; }
.track { position: relative; flex: 1; height: 3px; border-radius: 2px; background: #fff; border-top: 1px solid #aaa; }
.knob { position: absolute; width: 10px; height: 8px; }
.track .knob { left: 45%; top: -5px; height: 10px; }

.col-body { display: flex; height: 76px; padding: 4px 12px 0 5px; }
.swatch { width: 34px; height: 68px; flex: none; }
.rgb { flex: 1; display: grid; grid-template-columns: 13px 1fr 30px; grid-auto-rows: 23px; }
.rgb label { line-height: 16px; }
.ramp { position: relative; height: 20px; margin-right: 5px; padding-top: 6px; }
.ramp i { display: block; height: 6px; border: 1px solid #999; }
.ramp.r i { background: linear-gradient(90deg, #000, #d01010); }
.ramp.g i { background: linear-gradient(90deg, #c00808, #c8f020); }
.ramp.b i { background: linear-gradient(90deg, #c00808, #a818e0); }
.ramp .knob { top: 12px; }
.rgb input { width: 30px; height: 19px; padding-left: 5px; border: 1px solid #a3b3bc; color: #9b9b90; }
.spectrum { display: flex; height: 16px; margin: 0 3px 2px; border-top: 1px solid #999; }
.hues { flex: 1; background: linear-gradient(rgba(255,255,255,.8), rgba(255,255,255,0) 45%, rgba(0,0,0,0) 50%, rgba(0,0,0,.8)), linear-gradient(90deg, #e01818, #f8e800 17%, #10a030 33%, #10b0d8 50%, #1828a0 65%, #d010a0 83%, #e01818); }
.bw { width: 7px; background: linear-gradient(#fff 50%, #000 50%); }

.listwrap { display: flex; }
.list { flex: 1; }
.pscroll { width: 14px; display: flex; flex-direction: column; justify-content: space-between; background: #fafaf8; }
.pscroll button { height: 14px; background: #ecebe3; display: grid; place-items: center; }
.pscroll button::after { content: ""; width: 5px; height: 5px; border: solid #bbb; border-width: 2px 0 0 2px; transform: rotate(45deg); }
.pscroll .dn::after { transform: rotate(225deg); }
.act-list { height: 79px; }
.arow { display: flex; align-items: center; height: 21px; border-bottom: 1px solid #aaa99a; }
.cell { width: 20px; height: 20px; border-right: 1px solid #b5b4a6; display: grid; place-items: center; }
.cell svg { width: 11px; height: 11px; }
.box { width: 13px; height: 13px; border: 1px solid #c5c4b6; }
.tri { width: 8px; height: 12px; margin: 0 6px 0 5px; }
.fold { width: 16px; height: 14px; margin-right: 4px; }
.ficons { flex: 1; display: flex; justify-content: space-between; padding: 0 6px; }
.act-ic { padding-left: 26px; }
.ficons svg { width: 13px; height: 13px; }
.ficons .wide { width: 18px; }

.lrow { display: flex; align-items: center; height: 24px; padding: 0 3px 0 2px; border-bottom: 1px solid #b5b4a6; color: #99988c; }
.lrow label { margin-left: auto; margin-right: 3px; }
.selwrap { position: relative; }
.lrow select { appearance: none; width: 95px; height: 17px; padding-left: 3px; border: 1px solid #c5c4b6; background: #f4f4ee; color: #99988c; opacity: 1; }
.selwrap::after { content: ""; position: absolute; right: 6px; top: 4px; width: 5px; height: 5px; border: solid #aaa; border-width: 0 2px 2px 0; transform: rotate(45deg); }
.num { display: flex; align-items: center; width: 48px; height: 17px; border: 1px solid #c0bfb1; }
.num input { width: 33px; padding-left: 4px; color: #99988c; }
.num span { border: 3px solid transparent; border-left: 4px solid #aaa; border-right: 0; margin-left: 4px; }
.lockrow { height: 25px; gap: 4px; }
.lockrow > span { margin-right: 3px; }
.lockrow label { margin-right: 0; }
.lockrow svg { width: 12px; height: 12px; }
.lockrow .lk { color: #555; }
.lay-list { height: 138px; }
.layer { display: flex; height: 39px; border-bottom: 1px solid #b5b4a6; }
.eye { width: 21px; display: grid; place-items: center; }
.eye svg { width: 14px; height: 12px; }
.lsel { flex: 1; display: flex; align-items: center; padding: 0 14px 0 2px; background: #2d63bb; color: #fff; }
.lthumb { width: 30px; height: 31px; margin-right: 5px; background: #fafafa; border: 1px solid #111; }
.lsel .lk { width: 12px; height: 12px; margin-left: auto; color: #111; }

.dialog { position: absolute; left: 246px; top: 195px; width: 468px; border: solid #0a22a8; border-width: 0 3px 3px; border-radius: 7px 7px 0 0; background: var(--face); }
.d-title { display: flex; align-items: center; justify-content: space-between; height: 28px; margin: 0 -3px; padding: 2px 4px 0 6px; border-radius: 7px 7px 0 0; background: linear-gradient(#0a42c8, #2f82f8 3px, #0553e0 8px, #0052e6 15px, #0066ff 24px, #0244c4); }
.d-close { width: 20px; height: 20px; border: 1px solid #fff; border-radius: 3px; color: #fff; background: linear-gradient(135deg, #ec8a6c, #d04420); }
.d-close svg { width: 18px; height: 18px; }
.d-body { display: flex; align-items: center; height: 84px; padding: 0 10px 0 9px; }
.d-thumb { width: 61px; height: 64px; margin-right: 7px; }
.d-body label { margin-right: 5px; }
#name { flex: 1; min-width: 0; height: 22px; padding-left: 4px; border: 1px solid #7f9db9; background: #f9f9f9; outline: 0; }
#name::selection { background: #316ac5; color: #fff; }
.d-btns { display: flex; flex-direction: column; gap: 9px; margin-left: 8px; }
.d-btns button { width: 67px; height: 19px; border: 1px solid #1c4478; border-radius: 3px; background: linear-gradient(#fff, #ecebe4 80%, #d8d4c8); }
.d-btns .default { box-shadow: inset 0 0 0 2px #a9c4f0; }
.ibeam { position: absolute; left: 168px; top: 65px; width: 9px; height: 17px; }
```

FILE: app.js
```js
const NS = "http://www.w3.org/2000/svg";

function add(parent, tag, attrs, text) {
  const el = document.createElementNS(NS, tag);
  for (const key in attrs) el.setAttribute(key, attrs[key]);
  if (text !== undefined) el.textContent = text;
  parent.appendChild(el);
}

// Draws one ruler: a labelled tick per inch, eight divisions each.
function drawRuler(svg, vertical, zero, inch) {
  const depth = vertical ? 13 : 15;
  const box = svg.getBoundingClientRect();
  const size = vertical ? box.height : box.width;
  const step = inch / 8;
  for (let i = Math.ceil(-zero / step); zero + i * step < size; i++) {
    const p = Math.round(zero + i * step) + 0.5;
    const len = i % 8 === 0 ? depth : i % 4 === 0 ? 5 : i % 2 === 0 ? 4 : 3;
    add(svg, "line", vertical
      ? { x1: depth - len, x2: depth, y1: p, y2: p }
      : { x1: p, x2: p, y1: depth - len, y2: depth });
    if (i % 8 === 0 && p + 12 < size) {
      add(svg, "text", vertical ? { x: 1, y: p + 9 } : { x: p + 2, y: 9 }, Math.abs(i / 8));
    }
  }
}

drawRuler(document.getElementById("hruler"), false, 298, 67.5);
drawRuler(document.getElementById("vruler"), true, 130, 70.4);

const nameField = document.getElementById("name");
nameField.focus();
nameField.select();
```
